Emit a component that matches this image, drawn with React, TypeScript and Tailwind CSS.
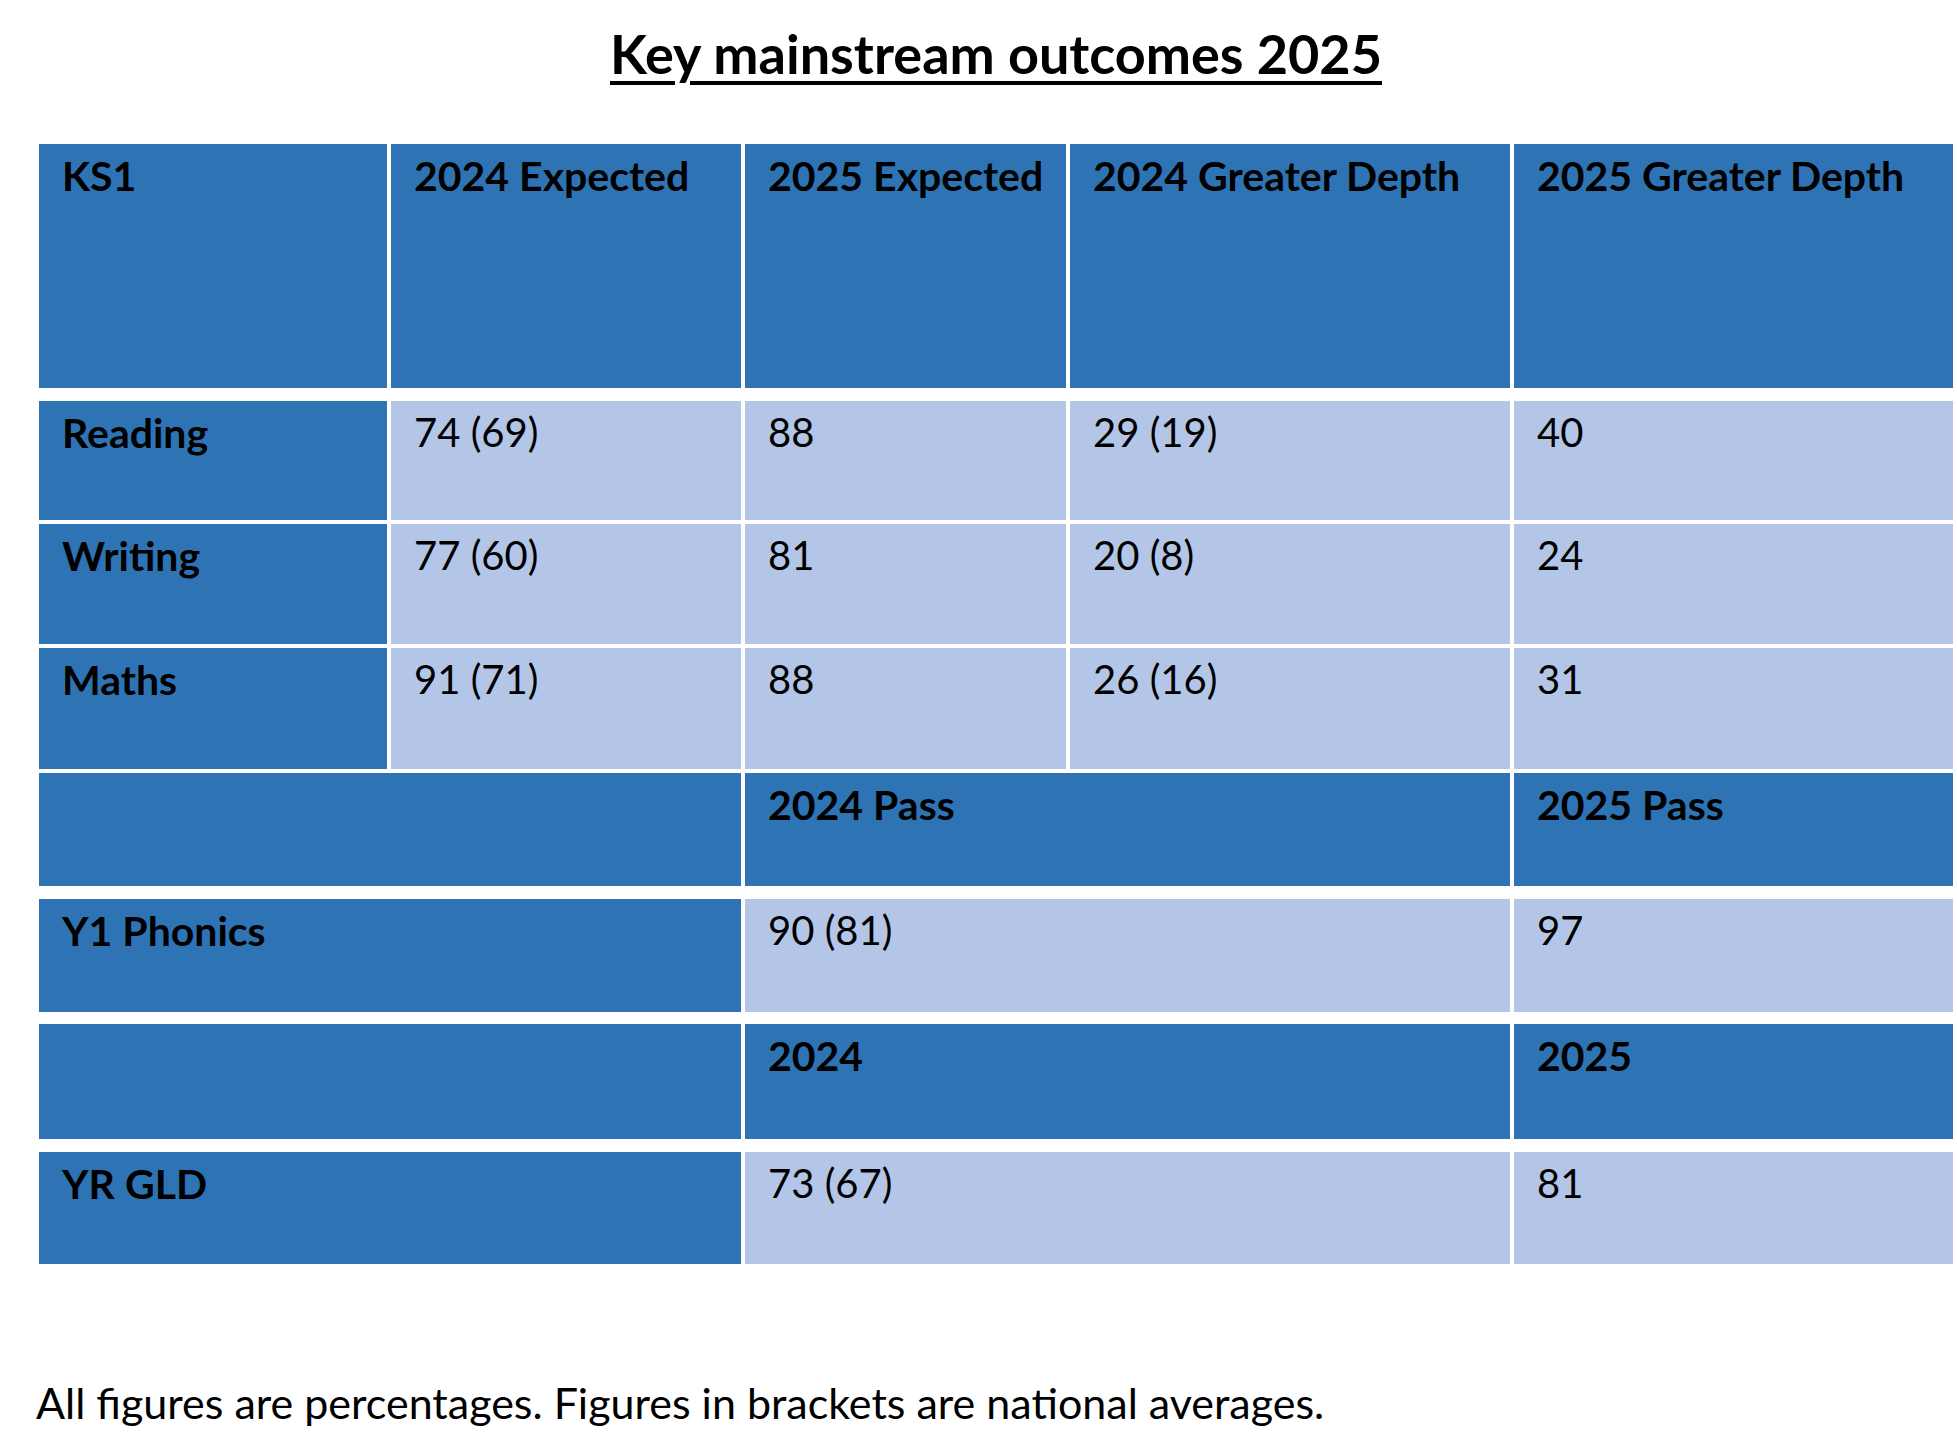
// Key mainstream outcomes table
const cols = "grid grid-cols-[348px_350px_321px_440px_439px] gap-x-[4px]"
const dark = "bg-[#2e74b5]"
const light = "bg-[#b4c6e7]"
const cell = "pl-[23px] pt-[11px] text-[40px] leading-none whitespace-nowrap"
const head = "font-bold text-[41px]"

const ks1 = [
  { subject: "Reading", values: ["74 (69)", "88", "29 (19)", "40"], h: "h-[119px]", mt: "mt-[13px]" },
  { subject: "Writing", values: ["77 (60)", "81", "20 (8)", "24"], h: "h-[120px]", mt: "mt-[4px]" },
  { subject: "Maths", values: ["91 (71)", "88", "26 (16)", "31"], h: "h-[121px]", mt: "mt-[4px]" },
]

export default function App() {
  return (
    <div className="min-h-screen w-full bg-white text-black font-[Lato,sans-serif] pl-[36px]">
      <div className="ml-[3px] w-[1914px]">
        <div className="h-[144px] pt-[27px] text-center">
          <h1 className="inline-block text-[54px] font-bold leading-none underline decoration-[4px] underline-offset-[7px]">
            Key mainstream outcomes 2025
          </h1>
        </div>

        {/* KS1 header */}
        <div className={`${cols} h-[244px]`}>
          <div className={`${dark} ${cell} ${head}`}>KS1</div>
          <div className={`${dark} ${cell} ${head}`}>2024 Expected</div>
          <div className={`${dark} ${cell} ${head}`}>2025 Expected</div>
          <div className={`${dark} ${cell} ${head}`}>2024 Greater Depth</div>
          <div className={`${dark} ${cell} ${head}`}>2025 Greater Depth</div>
        </div>

        {ks1.map((row) => (
          <div key={row.subject} className={`${cols} ${row.h} ${row.mt}`}>
            <div className={`${dark} ${cell} ${head}`}>{row.subject}</div>
            {row.values.map((v, i) => (
              <div key={i} className={`${light} ${cell}`}>
                {v}
              </div>
            ))}
          </div>
        ))}

        {/* phonics */}
        <div className={`${cols} h-[113px] mt-[4px]`}>
          <div className={`${dark} ${cell} col-span-2`}></div>
          <div className={`${dark} ${cell} ${head} col-span-2`}>2024 Pass</div>
          <div className={`${dark} ${cell} ${head}`}>2025 Pass</div>
        </div>
        <div className={`${cols} h-[113px] mt-[13px]`}>
          <div className={`${dark} ${cell} ${head} col-span-2`}>Y1 Phonics</div>
          <div className={`${light} ${cell} col-span-2`}>90 (81)</div>
          <div className={`${light} ${cell}`}>97</div>
        </div>

        {/* GLD */}
        <div className={`${cols} h-[115px] mt-[12px]`}>
          <div className={`${dark} ${cell} col-span-2`}></div>
          <div className={`${dark} ${cell} ${head} col-span-2`}>2024</div>
          <div className={`${dark} ${cell} ${head}`}>2025</div>
        </div>
        <div className={`${cols} h-[112px] mt-[13px]`}>
          <div className={`${dark} ${cell} ${head} col-span-2`}>YR GLD</div>
          <div className={`${light} ${cell} col-span-2`}>73 (67)</div>
          <div className={`${light} ${cell}`}>81</div>
        </div>
      </div>

      <p className="mt-[117px] text-[43px] leading-none">
        All figures are percentages. Figures in brackets are national averages.
      </p>
    </div>
  )
}
